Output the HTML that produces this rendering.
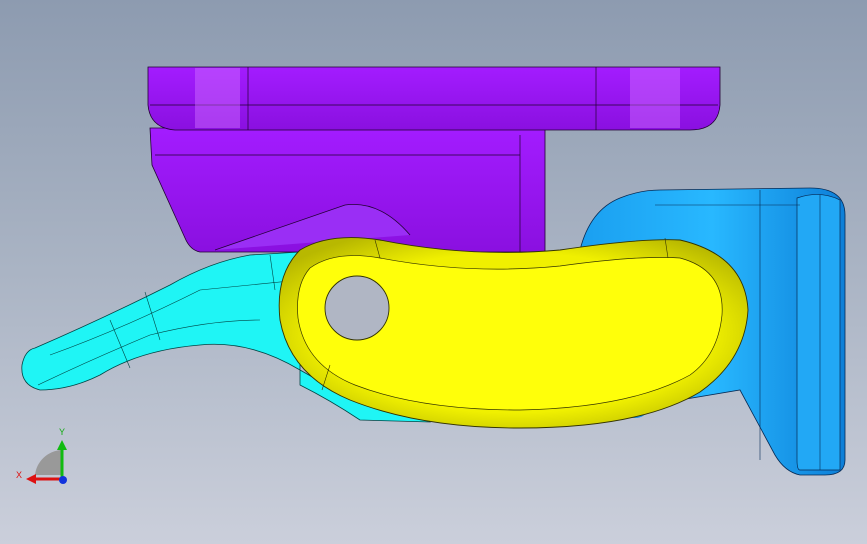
<!DOCTYPE html>
<html><head><meta charset="utf-8"><style>
html,body{margin:0;padding:0;width:867px;height:544px;overflow:hidden}
body{background:linear-gradient(#8d9bb0 0%,#aab4c4 50%,#cbcfdb 100%)}
svg{position:absolute;left:0;top:0}
</style></head><body>
<svg width="867" height="544" viewBox="0 0 867 544" xmlns="http://www.w3.org/2000/svg">
<defs>
<linearGradient id="pg" x1="0" y1="0" x2="0" y2="1"><stop offset="0" stop-color="#a31cff"/><stop offset="1" stop-color="#8a10e0"/></linearGradient>
<linearGradient id="bg" x1="0" y1="0" x2="1" y2="0"><stop offset="0" stop-color="#1a9ff0"/><stop offset="0.5" stop-color="#28b8ff"/><stop offset="1" stop-color="#0d7fd8"/></linearGradient>
<radialGradient id="yg" cx="0.5" cy="0.5" r="0.6"><stop offset="0.7" stop-color="#f0f000"/><stop offset="1" stop-color="#b8b800"/></radialGradient>
</defs>
<path d="M150 128 L545 128 L545 252 L200 252 Q190 250 185 238 L152 165 Z" fill="url(#pg)" stroke="#220033" stroke-width="0.8"/>
<path d="M520 135 L520 252 M155 155 L520 155" stroke="#220033" stroke-width="0.7" fill="none"/>
<path d="M215 250 L345 205 Q380 200 410 235" fill="#9a2ef5" stroke="#220033" stroke-width="0.8"/>
<path d="M148 67 L720 67 L720 105 Q718 130 690 130 L175 130 Q150 128 148 105 Z" fill="url(#pg)" stroke="#220033" stroke-width="0.8"/>
<path d="M150 105 L718 105 M248 67 L248 130 M596 67 L596 130" stroke="#220033" stroke-width="0.7"/>
<rect x="195" y="68" width="45" height="60" fill="#d070ff" opacity="0.45"/>
<rect x="630" y="68" width="50" height="60" fill="#d070ff" opacity="0.45"/>
<path d="M580 250 Q590 210 620 198 Q640 190 660 190 L810 188 Q845 188 845 215 L845 460 Q845 475 825 475 L800 475 Q785 472 775 455 L740 390 L650 405 L640 260 Z" fill="url(#bg)" stroke="#062a55" stroke-width="0.8"/>
<path d="M797 198 Q820 190 840 200 L840 470 L800 470 Q797 470 797 460 Z" fill="#22a8f5" stroke="#062a55" stroke-width="0.7"/>
<path d="M760 190 L760 460 M820 195 L820 470 M655 205 L800 205" stroke="#062a55" stroke-width="0.6" fill="none"/>
<ellipse cx="635" cy="410" rx="12" ry="8" fill="#1a8fe0"/>
<path d="M35 348 Q100 320 170 285 Q210 262 250 255 L300 252 L300 385 Q330 400 360 420 L430 422 L420 410 Q350 400 300 370 Q250 340 200 345 Q140 350 100 375 Q70 390 40 390 Q20 385 22 365 Q25 350 35 348 Z" fill="#1ff5f5" stroke="#044" stroke-width="0.8"/>
<path d="M38 385 Q90 360 150 335 Q210 320 260 320 M50 355 Q120 330 200 290 L300 280 M110 320 L130 368 M145 292 L160 340 M270 255 L275 290" stroke="#044" stroke-width="0.6" fill="none"/>
<path d="M300 250 Q330 232 380 240 Q470 258 560 250 Q640 238 680 240 Q745 255 748 310 Q745 360 700 392 Q640 428 520 428 Q420 428 350 400 Q290 375 280 320 Q275 275 300 250 Z" fill="url(#yg)" stroke="#333300" stroke-width="0.9"/>
<path d="M310 268 Q335 250 380 258 Q470 275 560 266 Q640 255 680 258 Q725 270 722 315 Q718 355 690 375 Q630 408 520 410 Q420 410 355 385 Q305 365 298 318 Q295 285 310 268 Z" fill="#ffff0a" stroke="#333300" stroke-width="0.7"/>
<circle cx="357" cy="308" r="32" fill="#b0b6c4" stroke="#333300" stroke-width="0.9"/>
<path d="M375 240 L380 258 M330 365 L322 390 M665 238 L668 258" stroke="#333300" stroke-width="0.6"/>
<path d="M35 475 A28 28 0 0 1 62 450 L62 475 Z" fill="#999"/>
<line x1="62" y1="478" x2="62" y2="448" stroke="#11bb11" stroke-width="3"/>
<polygon points="57,450 67,450 62,440" fill="#11bb11"/>
<line x1="62" y1="479" x2="34" y2="479" stroke="#dd1111" stroke-width="3"/>
<polygon points="36,474 36,484 26,479" fill="#dd1111"/>
<circle cx="63" cy="480" r="4" fill="#1133dd"/>
<text x="59" y="435" font-family="Liberation Sans,sans-serif" font-size="9" fill="#11aa11">Y</text>
<text x="16" y="478" font-family="Liberation Sans,sans-serif" font-size="9" fill="#dd1111">X</text>
</svg>
</body></html>
